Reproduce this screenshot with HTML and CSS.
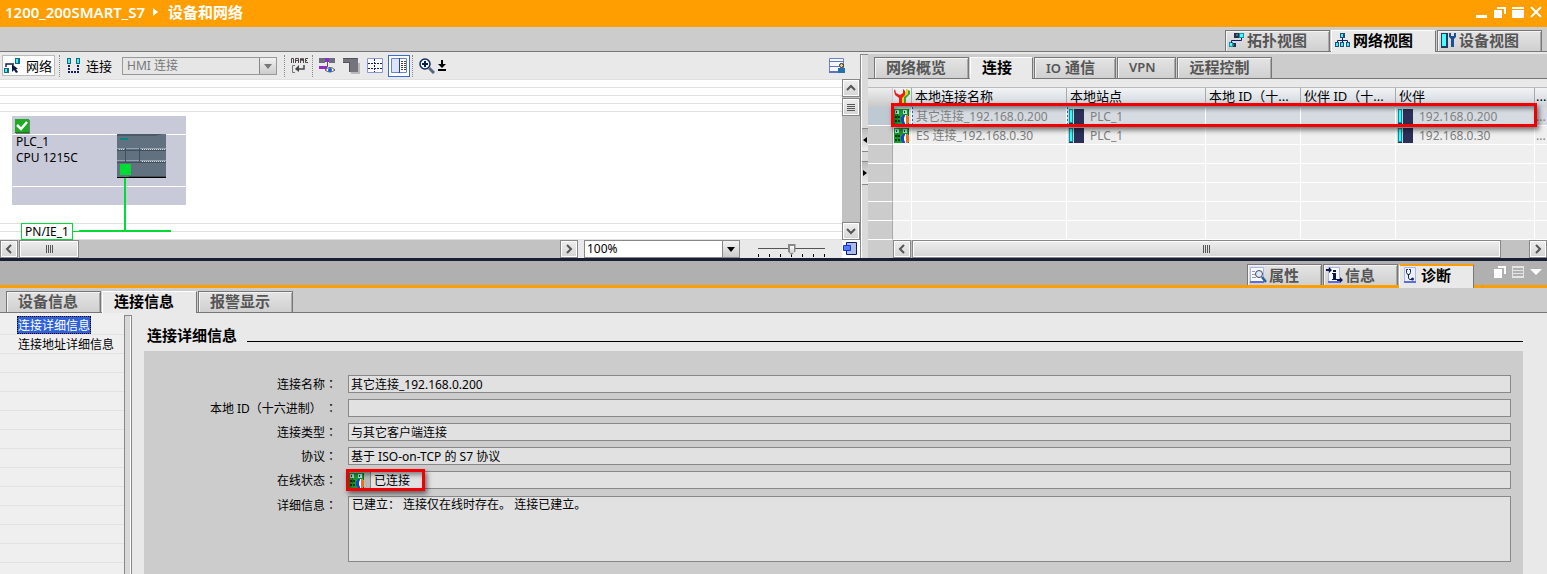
FILE: index.html
```html
<!DOCTYPE html>
<html lang="zh-CN">
<head>
<meta charset="utf-8">
<meta name="viewport" content="width=device-width, initial-scale=1">
<title>设备和网络</title>
<link rel="stylesheet" href="styles.css">
</head>
<body>
<svg class="sprite" aria-hidden="true">
  <symbol id="i-plc" viewBox="0 0 16 15"><path fill="#2c3058" d="M0 0h16v15H0z"/><path fill="#0c8f9c" d="M1 0h4v14H1z"/><path fill="#3ff" d="M2 1h2v12H2z"/><path fill="#c8d4da" d="M0 0h1v15H0zM5 0h1v15H5z"/></symbol>
  <symbol id="i-conn" viewBox="0 0 15 15"><path fill="#1c9a2c" d="M0 0h15v15H0z"/><path fill="#0d6f1c" d="M3 5h1v5H3zM11 5h1v3h-1zM14 0h1v15h-1z"/><path fill="#a9e6d3" d="M1 1h4v4H1zM9 1h4v4H9z"/><path fill="#14455a" d="M2 2h1v2H2zM10 2h1v2h-1z"/><path fill="#073f14" d="M1 7h2v2H1zM4 7h2v2H4zM1 11h2v2H1zM4 11h2v2H4z"/><path fill="#fff" d="M10 6h3l2 2v5l-2 2h-3l-3-2V8z"/><path fill="#1746c8" d="M9 6h2v1l-1 2v3l1 2v1H9l-2-2V8z"/><path fill="#ef6b20" d="M12 6h1l2 2v5l-2 2h-1z"/></symbol>
  <symbol id="i-left" viewBox="0 0 10 10"><path fill="none" stroke="#555" stroke-width="2" d="M7 1 3 5l4 4"/></symbol>
  <symbol id="i-right" viewBox="0 0 10 10"><path fill="none" stroke="#555" stroke-width="2" d="m3 1 4 4-4 4"/></symbol>
  <symbol id="i-up" viewBox="0 0 10 10"><path fill="none" stroke="#555" stroke-width="2" d="m1 7 4-4 4 4"/></symbol>
  <symbol id="i-down" viewBox="0 0 10 10"><path fill="none" stroke="#555" stroke-width="2" d="m1 3 4 4 4-4"/></symbol>
</svg>

<header class="titlebar">
  <span class="project">1200_200SMART_S7</span>
  <svg class="crumb" width="5" height="8" viewBox="0 0 5 8"><path fill="#fff" d="M0 0 5 4 0 8z"/></svg>
  <h1>设备和网络</h1>
  <div class="window-buttons">
    <button aria-label="最小化"><svg width="12" height="16" viewBox="0 0 12 16"><path fill="#fff" d="M0 11h11v3H0z"/></svg></button>
    <button aria-label="还原"><svg width="12" height="16" viewBox="0 0 12 16"><path fill="#fff" d="M3 3h9v7h-2V5H3zM0 6h8v8H0z"/></svg></button>
    <button aria-label="最大化"><svg width="12" height="16" viewBox="0 0 12 16"><path fill="#fff" d="M0 3h12v2H0zM0 6h12v8H0z"/></svg></button>
    <button aria-label="关闭"><svg width="12" height="16" viewBox="0 0 12 16"><path fill="none" stroke="#fff" stroke-width="2" d="m1 3 10 10M11 3 1 13"/></svg></button>
  </div>
</header>

<nav class="tabbar view-tabs" role="tablist">
  <button class="tab" role="tab"><svg width="17" height="16" viewBox="0 0 17 16"><path fill="#26304a" d="M6 1h5v5H6zM3 11h5v4H3z"/><path fill="#5d6b83" d="M8 2h2v2H8zM4 12h2v2H4z"/><path fill="#0f95a7" d="M11 1h5v5h-5zM1 10h4v5H1z"/><path fill="#4ff" d="M12 2h3v3h-3zM2 11h2v3H2z"/><path fill="none" stroke="#101e70" d="M13.5 6v2.500h-10V11"/></svg>拓扑视图</button>
  <button class="tab active" role="tab" aria-selected="true"><svg width="17" height="16" viewBox="0 0 17 16"><path fill="none" stroke="#101e70" d="M8.500 5v7M3.500 11V8.500h10V11"/><path fill="#1d5074" d="M6 1h5v5H6zM1 10h4v5H1zM6 10h4v5H6zM12 10h4v5h-4z"/><path fill="#4ef" d="M7 2h2v3H7zM2 11h2v3H2zM7 11h2v3H7zM13 11h2v3h-2z"/></svg>网络视图</button>
  <button class="tab" role="tab"><svg width="17" height="16" viewBox="0 0 17 16"><path fill="#243a5c" d="M1 1h7v15H1z"/><path fill="#4ff" d="M2 2h4v12H2z"/><path fill="#1c4f95" d="M9 1v4l2 2v8h3V7l2-2V1h-2v3h-3V1z"/></svg>设备视图</button>
</nav>

<main class="workspace">
  <section class="network">
    <div class="toolbar">
      <button class="tool tool-network"><svg width="17" height="16" viewBox="0 0 17 16"><path fill="#126a83" d="M11 0h5v6h-5zM0 10h5v5H0z"/><path fill="#4ee" d="M12 1h2v4h-2zM1 11h2v3H1z"/><path fill="none" stroke="#14205c" stroke-width="1.500" d="M2 9V6h8"/><path fill="#0b1744" d="m8 6 6 5h-2l2 3-2 1-2-3-2 2z"/></svg>网络</button>
      <span class="sep"></span>
      <button class="tool tool-connect"><svg width="15" height="16" viewBox="0 0 15 16"><path fill="#126a83" d="M1 0h4v6H1zM10 0h4v6h-4z"/><path fill="#4ee" d="M2 1h2v4H2zM11 1h2v4h-2z"/><path fill="none" stroke="#14205c" stroke-width="2" stroke-dasharray="2 1" d="M3 7v7h9V7"/></svg>连接</button>
      <span class="combo combo-type"><select disabled aria-label="连接类型"><option>HMI 连接</option></select></span>
      <span class="sep"></span>
      <button class="tool icon" aria-label="显示名称"><svg width="17" height="18" viewBox="0 0 17 18"><path fill="none" stroke="#4c4444" d="M.5 6V1.500h2V6M4.500 6V1.500h3V6M5 3.500h2M9.500 6V1.500h1v2h1v-2h1V6M17 1.500h-2.500v4H17M14 3.500h2"/><path fill="none" stroke="#777" d="M4 8.500H1.500v7H4"/><path fill="none" stroke="#444" stroke-width="1.500" d="M13 8v4H7"/><path fill="#444" d="m4 12 4-4v7z"/></svg></button>
      <span class="sep"></span>
      <button class="tool icon" aria-label="显示地址"><svg width="17" height="17" viewBox="0 0 17 17"><path fill="#6d6d82" d="M0 1h6v5H0zM10 1h6v5h-6z"/><path fill="#8f2cc4" d="M6 1h4v4H6zM0 9h8v3H0z"/><path stroke="#555" d="M8.500 5v5"/><path fill="#fff" stroke="#555" d="M6 13q5-5 10 0-5 4-10 0z"/><circle cx="11" cy="13" r="2" fill="#1c5bd7"/></svg></button>
      <button class="tool icon" aria-label="显示分页"><svg width="17" height="17" viewBox="0 0 17 17"><path fill="#b9b9bc" d="M6 6h11v11H8z"/><path fill="#74747c" d="M0 1h15v14H6V6H0z"/><path fill="#53535e" d="M0 1h15v1H0zM0 5h7v1H0zM6 5h1v10H6z"/></svg></button>
      <button class="tool icon" aria-label="显示网格"><svg width="17" height="17" viewBox="0 0 17 17"><path fill="#fafaff" stroke="#8a96d0" d="M.5 1.500h15v14H.5z"/><path fill="none" stroke="#16224f" stroke-dasharray="2 1" d="M1 6.500h14M1 11.500h14M7.500 2v13"/></svg></button>
      <button class="tool icon pressed" aria-label="显示概览"><svg width="17" height="17" viewBox="0 0 17 17"><path fill="#fff" stroke="#6983c6" d="M.5 1.500h15v14H.5z"/><path fill="#dce4ff" d="M1 2h7v13H1z"/><path stroke="#284596" d="M8.500 1v15"/><path stroke="#444" stroke-dasharray="2 1" d="M10 4.500h5M10 6.500h5M10 8.500h5M10 10.500h5M10 12.500h5"/></svg></button>
      <span class="sep"></span>
      <button class="tool icon" aria-label="放大"><svg width="17" height="17" viewBox="0 0 17 17"><circle cx="6" cy="7" r="5" fill="#e5fbff" stroke="#132463" stroke-width="1.500"/><path stroke="#111a4a" stroke-width="2" d="M3 7h6M6 4v6"/><path stroke="#58687d" stroke-width="3" d="m10 11 5 5"/></svg></button>
      <button class="tool icon small" aria-label="更多"><svg width="8" height="11" viewBox="0 0 8 11"><path d="M3 0h2v4h3L4 8 0 4h3zM0 9h8v2H0z"/></svg></button>
      <button class="tool icon last" aria-label="用户视图"><svg width="17" height="17" viewBox="0 0 17 17"><path fill="#f4f7ff" stroke="#7180ce" d="M.5 1.500h14v13H.5z"/><path fill="#6573bc" d="M0 4h15v1H0zM0 9h10v1H0zM0 14h15v2H0z"/><path fill="#2471ac" d="M9 11h7v5H9z"/><circle cx="12.500" cy="8.500" r="2" fill="#f3cf8d" stroke="#222"/></svg></button>
    </div>
    <div class="canvas-row">
      <div class="canvas">
        <article class="node">
          <svg class="check" width="15" height="15" viewBox="0 0 15 15"><path fill="#777c75" d="M1 1h14v14H1z"/><path fill="#20aa24" d="M0 0h14v13H0z"/><path fill="#108016" d="M0 13h14v1H0z"/><path fill="none" stroke="#fff" stroke-width="2.500" d="m2 6 4 4 6-7"/></svg>
          <div class="node-text"><span>PLC_1</span><br><span>CPU 1215C</span></div>
          <svg class="device" width="49" height="44" viewBox="0 0 49 44"><path fill="#61717f" d="M0 0h49v44H0z"/><path fill="#4c5a67" d="M0 0h44v1H0zM0 1h40v1H0z"/><path fill="#088686" d="M3 4h8v2H3z"/><path fill="#93a1ad" d="M0 14h49v1H0zM0 26h49v1H0z"/><path fill="#414f5b" d="M0 16h49v1H0zM0 28h49v1H0zM8 14h1v14H8zM22 14h1v14h-1zM12 42h37v1H12z"/><path stroke="#d6dde2" stroke-dasharray="1 1" d="M2 15.500h6M25 15.500h23M25 27.500h23"/><path fill="#00dc35" d="M3 30h11v11H3z"/><path d="M0 43h49v1H0z"/></svg>
        </article>
        <span class="wire-drop"></span>
        <span class="wire-thin"></span>
        <span class="wire"></span>
        <span class="subnet">PN/IE_1</span>
      </div>
      <div class="vscroll">
        <button aria-label="向上滚动"><svg width="10" height="10"><use href="#i-up"/></svg></button>
        <span class="grip-v"></span>
        <button class="end" aria-label="向下滚动"><svg width="10" height="10"><use href="#i-down"/></svg></button>
      </div>
    </div>
    <div class="canvas-foot">
      <div class="hscroll">
        <button aria-label="向左滚动"><svg width="10" height="10"><use href="#i-left"/></svg></button>
        <span class="thumb thumb-short"></span>
        <button class="end" aria-label="向右滚动"><svg width="10" height="10"><use href="#i-right"/></svg></button>
      </div>
      <span class="combo combo-zoom"><select aria-label="缩放"><option>100%</option></select></span>
      <span class="zoom-slider"><input type="range" min="0" max="6" value="3" aria-label="缩放级别"></span>
      <button class="overview" aria-label="总览导航"><svg width="16" height="16" viewBox="0 0 16 16"><path fill="#aebce3" stroke="#081b75" d="M4.500 1.500h10v12h-10z"/><path fill="#4f79ff" stroke="#0f35e4" d="M1.500 4.500h7v5h-7z"/></svg></button>
    </div>
  </section>

  <div class="splitter">
    <button class="handle" aria-label="向左折叠"><svg width="4" height="6" viewBox="0 0 4 6"><path d="M4 0v6L0 3z"/></svg></button>
    <button class="handle" aria-label="向右折叠"><svg width="4" height="6" viewBox="0 0 4 6"><path d="M0 0v6l4-3z"/></svg></button>
  </div>

  <section class="details">
    <nav class="tabbar detail-tabs" role="tablist">
      <button class="tab wide" role="tab">网络概览</button>
      <button class="tab active" role="tab" aria-selected="true">连接</button>
      <button class="tab" role="tab"><span><span class="latin">IO</span> 通信</span></button>
      <button class="tab" role="tab"><span class="latin">VPN</span></button>
      <button class="tab wide" role="tab">远程控制</button>
    </nav>
    <div class="table-wrap">
      <table>
        <colgroup><col class="c-head"><col class="c-icon"><col class="c-name"><col class="c-part"><col class="c-id"><col class="c-id"><col class="c-part"><col></colgroup>
        <thead>
          <tr><th></th><th><svg width="16" height="16" viewBox="0 0 16 16"><path fill="#35a534" d="M12 1v3l1 2-4 3v7h3v-6l4-4V3z"/><path fill="#efd21a" d="M9 1v4l1 2-3 2v7h3v-7l4-3V2l-2-1v3h-1z"/><path fill="#e32118" d="M1 1 0 3l1 4 4 3v6h3v-6l3-3V3L9 1v4L6 7 2 5z"/></svg></th><th>本地连接名称</th><th>本地站点</th><th>本地 ID（十...</th><th>伙伴 ID（十...</th><th>伙伴</th><th>...</th></tr>
        </thead>
        <tbody>
          <tr class="selected"><td></td><td><svg width="15" height="15"><use href="#i-conn"/></svg></td><td class="focus">其它连接_192.168.0.200</td><td class="focus"><span class="station"><svg width="16" height="15"><use href="#i-plc"/></svg>PLC_1</span></td><td></td><td></td><td><span class="station"><svg width="16" height="15"><use href="#i-plc"/></svg>192.168.0.200</span></td><td>...</td></tr>
          <tr><td></td><td><svg width="15" height="15"><use href="#i-conn"/></svg></td><td>ES 连接_192.168.0.30</td><td><span class="station"><svg width="16" height="15"><use href="#i-plc"/></svg>PLC_1</span></td><td></td><td></td><td><span class="station"><svg width="16" height="15"><use href="#i-plc"/></svg>192.168.0.30</span></td><td>...</td></tr>
          <tr><td></td><td></td><td></td><td></td><td></td><td></td><td></td><td></td></tr>
          <tr><td></td><td></td><td></td><td></td><td></td><td></td><td></td><td></td></tr>
          <tr><td></td><td></td><td></td><td></td><td></td><td></td><td></td><td></td></tr>
          <tr><td></td><td></td><td></td><td></td><td></td><td></td><td></td><td></td></tr>
          <tr><td></td><td></td><td></td><td></td><td></td><td></td><td></td><td></td></tr>
        </tbody>
      </table>
      <span class="mark mark-row"></span>
    </div>
    <div class="table-foot">
      <div class="hscroll">
        <button aria-label="向左滚动"><svg width="10" height="10"><use href="#i-left"/></svg></button>
        <span class="thumb thumb-long"></span>
        <button class="end" aria-label="向右滚动"><svg width="10" height="10"><use href="#i-right"/></svg></button>
      </div>
    </div>
  </section>
</main>

<section class="inspector">
  <nav class="tabbar inspector-tabs" role="tablist">
    <button class="tab" role="tab"><svg width="17" height="16" viewBox="0 0 17 16"><path fill="#fafbff" stroke="#a9b6ee" d="M.5.5h13v14H.5z"/><path fill="#5b6edb" d="M0 14h14v2H0z"/><path stroke="#99a" d="M2 4.500h3M2 7.500h3M2 10.500h4"/><circle cx="9" cy="7" r="3.500" fill="#ddecf9" stroke="#445"/><path stroke="#286595" stroke-width="2.500" d="m12 10 4 5"/></svg>属性</button>
    <button class="tab" role="tab"><svg width="17" height="16" viewBox="0 0 17 16"><path fill="#fafbff" stroke="#a9b6ee" d="M2.500.5h11v14h-11z"/><path fill="#5b6edb" d="M2 14h12v2H2z"/><path fill="#10174c" d="M7 3h3v2H7zM6 6h4v6h1v1H6v-1h1V7H6zM0 2h3V0l3 3-3 3V4H0zM11 12h3v-2l3 3-3 3v-2h-3z"/></svg>信息</button>
    <button class="tab active" role="tab" aria-selected="true"><svg width="17" height="16" viewBox="0 0 17 16"><path fill="#edf1ff" stroke="#a9b6ee" d="M2.500.5h11v14h-11z"/><path fill="#5b6edb" d="M2 14h12v2H2z"/><path fill="none" stroke="#1a2551" d="M6 2.500H4.500v3l1 2h2l1-2v-3H7M6.500 8v3l1 1.500H10"/><circle cx="10.500" cy="12" r="1.500" fill="#1a2551"/></svg>诊断</button>
    <div class="pane-buttons">
      <button aria-label="浮动"><svg width="12" height="12" viewBox="0 0 12 12"><path fill="#fff" d="M4 0h8v8h-2V2H4zM0 3h8v9H0z"/></svg></button>
      <button aria-label="平铺"><svg width="12" height="12" viewBox="0 0 12 12"><path fill="#e4e4e4" d="M0 0h12v2H0zM0 4h12v1H0zM0 7h12v1H0zM0 10h12v2H0zM0 0h1v12H0zM11 0h1v12h-1z"/></svg></button>
      <button aria-label="折叠"><svg width="12" height="12" viewBox="0 0 12 12"><path fill="#fff" d="M0 3h12L6 9z"/></svg></button>
    </div>
  </nav>
  <nav class="tabbar sub-tabs" role="tablist">
    <button class="tab wide" role="tab">设备信息</button>
    <button class="tab wide active" role="tab" aria-selected="true">连接信息</button>
    <button class="tab wide" role="tab">报警显示</button>
  </nav>
  <div class="inspector-body">
    <ul class="tree">
      <li><a href="#info" class="current">连接详细信息</a></li>
      <li><a href="#address">连接地址详细信息</a></li>
    </ul>
    <div class="tree-splitter"></div>
    <form class="info" id="info">
      <h2>连接详细信息</h2>
      <div class="fields">
        <label for="f-name">连接名称<span class="colon" lang="zh-TW">：</span></label><input id="f-name" readonly value="其它连接_192.168.0.200">
        <label for="f-id">本地 ID（十六进制） <span class="colon" lang="zh-TW">：</span></label><input id="f-id" readonly value="">
        <label for="f-type">连接类型<span class="colon" lang="zh-TW">：</span></label><input id="f-type" readonly value="与其它客户端连接">
        <label for="f-proto">协议<span class="colon" lang="zh-TW">：</span></label><input id="f-proto" readonly value="基于 ISO-on-TCP 的 S7 协议">
        <label for="f-state">在线状态<span class="colon" lang="zh-TW">：</span></label>
        <div class="state"><span class="state-icon"><svg width="15" height="15"><use href="#i-conn"/></svg></span><input id="f-state" readonly value="已连接"><span class="mark mark-state"></span></div>
        <label for="f-detail">详细信息<span class="colon" lang="zh-TW">：</span></label><textarea id="f-detail" readonly>已建立： 连接仅在线时存在。 连接已建立。</textarea>
      </div>
    </form>
  </div>
</section>
</body>
</html>
```

FILE: styles.css
```css
* { box-sizing: border-box; }

body {
  margin: 0;
  min-height: 100vh;
  display: flex;
  flex-direction: column;
  background: #e9e9e9;
  color: #000;
  font: 12px/16px "Noto Sans", "Noto Sans CJK SC", sans-serif;
}

button, input, select, textarea { font: inherit; color: inherit; margin: 0; padding: 0; border: 0; background: none; border-radius: 0; }
svg { display: block; flex: none; }
.sprite { position: absolute; width: 0; height: 0; }

/* title bar */
.titlebar { display: flex; align-items: center; height: 27px; padding: 0 5px 3px; background: #ff9e00; color: #fff; }
.project { font-size: 15px; font-weight: 600; }
.crumb { margin: 0 10px 0 8px; }
.titlebar h1 { margin: 0; font-size: 15px; line-height: 20px; font-weight: 700; }
.window-buttons { display: flex; gap: 6px; margin-left: auto; }

/* tabs */
.tabbar { display: flex; align-items: flex-end; gap: 1px; background: #ccc; border-bottom: 1px solid #777; }
.tab {
  display: flex; align-items: center; gap: 2px;
  height: 21px; padding: 0 20px 2px 11px;
  font-size: 15px; line-height: 20px; font-weight: 700; color: #555; white-space: nowrap;
  border: 1px solid #777; border-bottom: 0;
  background: linear-gradient(#e4e4e4, #d0d0d0);
  box-shadow: inset 1px 1px #f4f4f4, inset -1px 0 #aaa;
}
.tab.active { height: 22px; margin-bottom: -1px; padding-bottom: 3px; color: #000; background: #e9e9e9; border-color: #fff #777 #fff #fff; box-shadow: none; }
.tab.wide { width: 95px; padding-right: 0; }
.latin { font-size: 13px; font-weight: 600; }
.view-tabs { height: 25px; justify-content: flex-end; padding-right: 5px; }
.view-tabs .tab { width: 105px; padding-left: 2px; padding-right: 2px; }

/* upper work area */
.workspace { display: grid; grid-template-columns: 860fr 8px 679fr; padding-top: 2px; border-bottom: 3px solid #1a1f33; }
.network { display: flex; flex-direction: column; min-width: 0; }
.toolbar { display: flex; align-items: center; height: 25px; padding: 0 14px 2px 2px; }
.tool { display: flex; align-items: center; gap: 5px; height: 21px; font-size: 13px; }
.tool.icon { width: 17px; justify-content: center; }
.tool.icon + .icon { margin-left: 7px; }
.tool.icon + .small { width: 8px; margin-left: 2px; }
.tool.icon + .last { margin-left: auto; }
.tool.icon + .pressed { width: 22px; height: 22px; margin-left: 4px; border: 1px solid #3a6bd6; background: #fff; }
.tool-network { width: 53px; padding-left: 1px; border: 1px solid #bbb; background: #fff; }
.tool-connect { margin-right: 10px; }
.sep { height: 22px; border-left: 1px dotted #888; margin: 0 6px 0 4px; }
.pressed + .sep { margin-left: 2px; }

.combo { position: relative; display: flex; height: 18px; border: 1px solid #888; background: #fff; }
.combo select { appearance: none; flex: 1; padding-left: 4px; line-height: 16px; }
.combo::after { content: ""; width: 16px; border-left: 1px solid #888; background: linear-gradient(#f2f2f2, #ccc); pointer-events: none; }
.combo::before { content: ""; position: absolute; right: 4px; top: 6px; border: 4px solid transparent; border-top: 5px solid #000; border-bottom: 0; pointer-events: none; }
.combo-type { width: 155px; margin-right: 3px; background: #e6e6e6; border-color: #999; }
.combo-type select { color: #777; opacity: 1; }
.combo-type::before { border-top-color: #777; }
.combo-zoom { width: 156px; margin-left: 6px; }
.combo-zoom select { padding-left: 2px; }

.canvas-row { flex: 1; display: flex; }
.canvas {
  flex: 1; position: relative; overflow: hidden;
  background:
    repeating-linear-gradient(#e0e0e0 0 1px, transparent 1px 8px) top / 100% 33px no-repeat,
    repeating-linear-gradient(#e0e0e0 0 1px, transparent 1px 8px) bottom / 100% 17px no-repeat,
    #fff;
}
.node { position: absolute; left: 12px; top: 37px; width: 174px; height: 89px; background: linear-gradient(#fff, #fff) 0 18px / 100% 1px no-repeat, linear-gradient(#fff, #fff) 0 70px / 100% 1px no-repeat, #c9cad9; }
.check { position: absolute; left: 3px; top: 3px; }
.node-text { padding: 18px 4px; }
.device { position: absolute; left: 105px; top: 18px; }
.wire-drop { position: absolute; left: 124px; top: 99px; width: 2px; height: 53px; background: #00dc35; }
.wire-thin { position: absolute; left: 73px; top: 152px; width: 8px; height: 1px; background: #00dc35; }
.wire { position: absolute; left: 79px; top: 151px; width: 92px; height: 2px; background: #00dc35; }
.subnet { position: absolute; left: 21px; top: 144px; width: 52px; height: 17px; border: 1px solid #00dc35; background: #fff; line-height: 15px; text-align: center; }

/* scroll bars */
.vscroll { display: flex; flex-direction: column; width: 18px; gap: 1px; background: #c2c2c2; }
.hscroll { display: flex; flex: 1; gap: 1px; height: 18px; background: #c2c2c2; }
.vscroll button, .hscroll button, .thumb, .grip-v {
  display: flex; align-items: center; justify-content: center; width: 18px; height: 18px;
  border: 1px solid #888; background: linear-gradient(#eee, #d5d5d5); box-shadow: inset 0 0 0 1px #fff;
}
.vscroll .end { margin-top: auto; }
.hscroll .end { margin-left: auto; }
.thumb::after { content: ""; width: 7px; height: 8px; background: repeating-linear-gradient(90deg, #555 0 1px, transparent 1px 2px); }
.grip-v::after { content: ""; width: 8px; height: 7px; background: repeating-linear-gradient(#555 0 1px, transparent 1px 2px); }
.hscroll .thumb-short { width: 60px; }
.hscroll .thumb-long { width: 90%; }

.canvas-foot { display: flex; height: 18px; }
.zoom-slider { width: 102px; padding: 2px 17px 0 18px; }
.zoom-slider input {
  display: block; width: 67px; height: 15px; appearance: none;
  background:
    linear-gradient(#555, #555) 0 6px / 100% 1px no-repeat,
    repeating-linear-gradient(90deg, #000 0 1px, transparent 1px 11px) 0 100% / 100% 3px no-repeat;
}
.zoom-slider input::-webkit-slider-thumb { appearance: none; width: 8px; height: 11px; background: linear-gradient(#fff, #ccc) center / 4px 7px no-repeat, #888; clip-path: polygon(0 0, 100% 0, 100% 65%, 50% 100%, 0 65%); }
.overview { width: 18px; background: #fff; }

.splitter { display: flex; flex-direction: column; gap: 9px; padding: 73px 0 0 1px; border-left: 1px solid #888; border-top: 1px solid #888; background: #dadada; box-shadow: inset 1px 0 #fff; }
.handle { display: flex; align-items: center; justify-content: center; height: 24px; border: 1px solid #888; border-width: 1px 0; background: linear-gradient(#bbb, #eee); }

/* connection table */
.details { display: flex; flex-direction: column; min-width: 0; }
.detail-tabs { height: 25px; padding-left: 6px; }
.table-wrap { position: relative; padding-top: 8px; }
table { width: 100%; table-layout: fixed; border-collapse: separate; border-spacing: 0; }
.c-head { width: 25px; }
.c-icon { width: 19px; }
.c-name { width: 155px; }
.c-part { width: 139px; }
.c-id { width: 95px; }
th, td { height: 19px; padding: 1px 0 0 4px; overflow: hidden; white-space: nowrap; text-align: left; line-height: 16px; }
th { height: 20px; padding: 0 0 3px 3px; font-size: 13px; font-weight: 400; border-top: 1px solid #bbb; border-right: 1px solid #aaa; background: linear-gradient(#f2f4f6, #cdd4db); }
th:first-child { background: linear-gradient(#eee, #c8c8c8); border-right-color: #ccc; }
td { color: #808080; background: #efefef; border: 1px solid #fff; border-width: 0 1px 1px 0; }
td:first-child { background: #ccc; border-right-color: #aaa; }
th:nth-child(2), td:nth-child(2) { padding-left: 1px; }
th:last-child, td:last-child { padding-left: 1px; border-right: 0; }
.selected td { background: #d5dbe1; }
.selected td:first-child { background: #bfc9d4; }
.selected .focus { background: repeating-linear-gradient(#2864d8 0 2px, #d5dbe1 2px 4px) 0 0 / 1px 100% no-repeat, #d5dbe1; }
.station { display: flex; align-items: center; gap: 6px; margin-left: -3px; }
.table-foot { display: flex; height: 18px; padding-left: 25px; background: #ccc; }

/* highlight frames */
.mark { position: absolute; border: 3px solid #f00000; box-shadow: 2px 3px 5px #0008, inset 2px 3px 4px #0006; pointer-events: none; }
.mark-row { left: 23px; right: 10px; top: 24px; height: 24px; }
.mark-state { left: -2px; top: -2px; width: 79px; height: 22px; }

/* inspector */
.inspector { flex: 1; display: flex; flex-direction: column; }
.inspector-tabs { height: 27px; background: #b0b0b0; border-bottom: 3px solid #ff9e00; }
.inspector-tabs .tab { width: 75px; padding: 0 2px; }
.inspector-tabs .tab:first-child { margin-left: auto; }
.inspector-tabs .tab.active { height: 24px; margin-bottom: -3px; padding-bottom: 4px; border-top: 2px solid #ff9e00; }
.pane-buttons { display: flex; gap: 6px; padding: 0 5px 7px 19px; }
.sub-tabs { height: 25px; padding-left: 6px; }

.inspector-body { flex: 1; display: flex; }
.tree { width: 124px; margin: 0; padding: 3px 0 0 17px; list-style: none; background: repeating-linear-gradient(transparent 0 18px, #e2e2e2 18px 19px) 0 3px, #efefef; }
.tree li { display: flex; align-items: flex-start; height: 19px; white-space: nowrap; }
.tree a { height: 18px; border: 1px solid transparent; color: #000; line-height: 18px; text-decoration: none; }
.tree .current { background: #2f62d6; color: #fff; border: 1px dotted #000; }
.tree-splitter { width: 8px; margin-top: 2px; border: 1px solid #888; border-bottom: 0; background: #d8d8d8; box-shadow: inset -1px 0 #fff; }

.info { flex: 1; padding: 12px 24px 1px 12px; }
.info h2 { display: flex; align-items: center; gap: 10px; height: 20px; margin: 0 0 6px 3px; padding-bottom: 1px; font-size: 15px; line-height: 20px; font-weight: 700; }
.info h2::after { content: ""; flex: 1; height: 1px; margin-top: 14px; background: #000; }
.fields { display: grid; grid-template-columns: 193px 1fr; gap: 6px 11px; padding: 24px 12px 12px 0; background: #ccc; }
.fields label { height: 18px; padding-top: 1px; text-align: right; line-height: 18px; white-space: nowrap; }
.colon { font-family: "Noto Sans CJK TC", sans-serif; line-height: 16px; }
.fields input, .fields textarea { display: block; width: 100%; height: 18px; padding: 0 2px; border: 1px solid #888; background: #e1e1e1; }
.fields textarea { height: 66px; padding: 0 3px; resize: none; }
.state { position: relative; display: flex; }
.state-icon { width: 22px; padding: 2px 1px; background: #b8b8b8; }
.state .state-icon + input { flex: 1; width: auto; padding-left: 3px; }
```
